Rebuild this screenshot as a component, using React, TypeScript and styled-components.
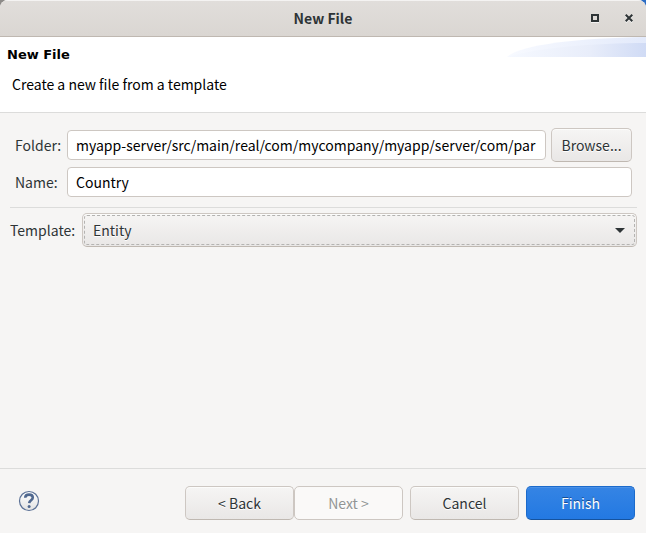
import React from "react";
import styled, { createGlobalStyle, css } from "styled-components";

const uiFont = `"Noto Sans CJK SC", "Noto Sans", sans-serif`;

const GlobalStyle = createGlobalStyle`
  *, *::before, *::after { box-sizing: border-box; }
  body {
    margin: 0;
    background: linear-gradient(90deg, #8d8b89 50%, #2a6cc4 50%);
    font-family: ${uiFont};
    font-size: 14px;
    line-height: 22px;
    color: #2e3436;
  }
  button, input, select { font: inherit; color: inherit; margin: 0; }
`;

const Dialog = styled.main`
  display: flex;
  flex-direction: column;
  min-height: 100vh;
  background: #f6f5f4;
  border-radius: 8px 8px 0 0;
  overflow: hidden;
`;

const TitleBar = styled.header`
  display: grid;
  grid-template-columns: 1fr auto 1fr;
  align-items: center;
  height: 37px;
  padding: 0 5px;
  background: linear-gradient(#e1dedb, #dad6d2);
  border-bottom: 1px solid #bfb8b1;
  box-shadow: inset 0 1px #f4f3f2;
`;

const WindowTitle = styled.span`
  grid-column: 2;
  font-weight: 700;
`;

const WindowControls = styled.div`
  display: flex;
  justify-content: flex-end;
  gap: 10px;
`;

const ControlButton = styled.button`
  display: grid;
  place-items: center;
  width: 24px;
  height: 24px;
  padding: 0;
  border: 0;
  background: none;

  svg { display: block; }
`;

const Banner = styled.section`
  display: flex;
  justify-content: space-between;
  align-items: flex-start;
  height: 76px;
  background: #fff;
  border-bottom: 1px solid #dcdcdb;
  color: #000;
`;

const BannerText = styled.div`
  padding: 8px 7px;
`;

const BannerTitle = styled.h1`
  margin: 0;
  font: 700 13px/20px "DejaVu Sans", sans-serif;
`;

const BannerMessage = styled.p`
  margin: 8px 0 0;
  padding-left: 5px;
`;

const Swoosh = styled.svg`
  display: block;
  flex: none;
`;

const Content = styled.form`
  flex: 1;
  display: flex;
  flex-direction: column;
`;

const Page = styled.div`
  flex: 1;
  padding: 15px 9px 0 10px;
`;

const Fields = styled.div`
  display: grid;
  grid-template-columns: 47px 1fr auto;
  align-items: center;
  gap: 5px;
  padding: 0 5px 10px;
  border-bottom: 1px solid #dcdcdb;
`;

const Label = styled.label`
  white-space: nowrap;
`;

const TextField = styled.input<{ $wide?: boolean }>`
  grid-column: ${({ $wide }) => ($wide ? "2 / -1" : "auto")};
  width: 100%;
  min-width: 0;
  height: 30px;
  padding: 0 8px;
  border: 1px solid #cdc7c2;
  border-radius: 4px;
  background: #fff;
  color: #000;
  outline: none;
`;

const raised = css`
  border: 1px solid #cdc7c2;
  border-bottom-color: #bfb8b1;
  border-radius: 5px;
  background: linear-gradient(#f6f5f4, #e9e7e6);
  box-shadow: inset 0 1px #fcfcfb;
  text-shadow: 0 1px #fff;
`;

const PushButton = styled.button<{ $primary?: boolean; $compact?: boolean }>`
  ${raised}
  width: ${({ $compact }) => ($compact ? "81px" : "109px")};
  height: 34px;
  padding: 0;

  &:disabled {
    border-color: #cdc7c2;
    background: #faf9f8;
    box-shadow: none;
    color: #929595;
  }

  ${({ $primary }) =>
    $primary &&
    css`
      border-color: #1b6acb;
      border-bottom-color: #15539e;
      background: linear-gradient(#3584e4, #2379e2);
      box-shadow: inset 0 1px #4a90e6;
      color: #fff;
      text-shadow: 0 -1px #184f94;
    `}
`;

const TemplateRow = styled.div`
  display: flex;
  align-items: center;
  gap: 5px;
  padding-top: 5px;
`;

const TemplateLabel = styled(Label)`
  min-width: 67px;
`;

const SelectBox = styled.div`
  position: relative;
  flex: 1;
`;

const Select = styled.select`
  ${raised}
  display: block;
  appearance: none;
  width: 100%;
  height: 34px;
  padding: 0 32px 0 10px;
  outline: 1px dashed #b4b3b1;
  outline-offset: -3px;
`;

const Arrow = styled.svg`
  position: absolute;
  right: 12px;
  top: 15px;
  pointer-events: none;
`;

const Footer = styled.footer`
  display: flex;
  align-items: center;
  justify-content: space-between;
  height: 65px;
  padding: 0 11px 0 18px;
  border-top: 1px solid #dcdcdb;
`;

const HelpButton = styled.button`
  padding: 0;
  border: 0;
  background: none;

  svg { display: block; }
`;

const Actions = styled.div`
  display: flex;
  gap: 7px;
  padding-top: 4px;
`;

const Steps = styled.div`
  display: flex;
`;

export default function App() {
  return (
    <>
      <GlobalStyle />
      <Dialog>
        <TitleBar>
          <WindowTitle>New File</WindowTitle>
          <WindowControls>
            <ControlButton type="button" aria-label="Maximize">
              <svg width="8" height="9" viewBox="0 0 8 9" shapeRendering="crispEdges">
                <path d="M0 8h8v1H0z" fill="#f4f3f2" />
                <path d="M0 0h8v8H0zM2 2v4h4V2z" fill="#2e3436" fillRule="evenodd" />
              </svg>
            </ControlButton>
            <ControlButton type="button" aria-label="Close">
              <svg width="8" height="9" viewBox="0 0 8 9" fill="none" strokeWidth="2">
                <path d="M.7 1.7l6.6 6.6M7.3 1.7L.7 8.3" stroke="#f4f3f2" />
                <path d="M.7.7l6.6 6.6M7.3.7L.7 7.3" stroke="#2e3436" />
              </svg>
            </ControlButton>
          </WindowControls>
        </TitleBar>

        <Banner>
          <BannerText>
            <BannerTitle>New File</BannerTitle>
            <BannerMessage>Create a new file from a template</BannerMessage>
          </BannerText>
          <Swoosh width="139" height="20" viewBox="0 0 139 20" aria-hidden="true">
            <defs>
              <linearGradient id="outer" x1="0" x2="1">
                <stop offset="0" stopColor="#f8faff" />
                <stop offset="1" stopColor="#e3eafb" />
              </linearGradient>
              <linearGradient id="inner" x1="0" x2="1">
                <stop offset="0" stopColor="#f6f9ff" />
                <stop offset="0.6" stopColor="#e8edfa" />
                <stop offset="1" stopColor="#d0dbf5" />
              </linearGradient>
            </defs>
            <path d="M0 20C12 8 70 1 139 0v20z" fill="url(#outer)" />
            <path d="M0 20C30 11 85 6 139 6v14z" fill="url(#inner)" />
          </Swoosh>
        </Banner>

        <Content onSubmit={(e: React.FormEvent) => e.preventDefault()}>
          <Page>
            <Fields>
              <Label htmlFor="folder">Folder:</Label>
              <TextField
                id="folder"
                defaultValue="myapp-server/src/main/real/com/mycompany/myapp/server/com/par"
              />
              <PushButton type="button" $compact>Browse...</PushButton>
              <Label htmlFor="name">Name:</Label>
              <TextField id="name" defaultValue="Country" $wide />
            </Fields>
            <TemplateRow>
              <TemplateLabel htmlFor="template">Template:</TemplateLabel>
              <SelectBox>
                <Select id="template" defaultValue="Entity">
                  <option>Entity</option>
                </Select>
                <Arrow width="10" height="5" viewBox="0 0 10 5" aria-hidden="true">
                  <path d="M0 0h10L5 5z" fill="#2e3436" />
                </Arrow>
              </SelectBox>
            </TemplateRow>
          </Page>

          <Footer>
            <HelpButton type="button" aria-label="Help">
              <svg width="22" height="22" viewBox="0 0 22 22" fill="none">
                <defs>
                  <linearGradient id="help" x1="0" x2="0" y1="0" y2="1">
                    <stop offset="0" stopColor="#fff" />
                    <stop offset="1" stopColor="#e2e2e2" />
                  </linearGradient>
                </defs>
                <circle cx="11" cy="11" r="9.5" fill="url(#help)" stroke="#5b7196" strokeWidth="1.2" />
                <path
                  d="M7.2 7.8C7.3 5.6 8.8 4.6 11 4.6s3.8 1.1 3.8 3c0 2.7-3.4 2.6-3.6 5.6"
                  stroke="#50688f"
                  strokeWidth="2.6"
                />
                <circle cx="11.1" cy="16.4" r="1.5" fill="#50688f" />
              </svg>
            </HelpButton>
            <Actions>
              <Steps>
                <PushButton type="button">&lt; Back</PushButton>
                <PushButton type="button" disabled>Next &gt;</PushButton>
              </Steps>
              <PushButton type="button">Cancel</PushButton>
              <PushButton type="submit" $primary>Finish</PushButton>
            </Actions>
          </Footer>
        </Content>
      </Dialog>
    </>
  );
}
